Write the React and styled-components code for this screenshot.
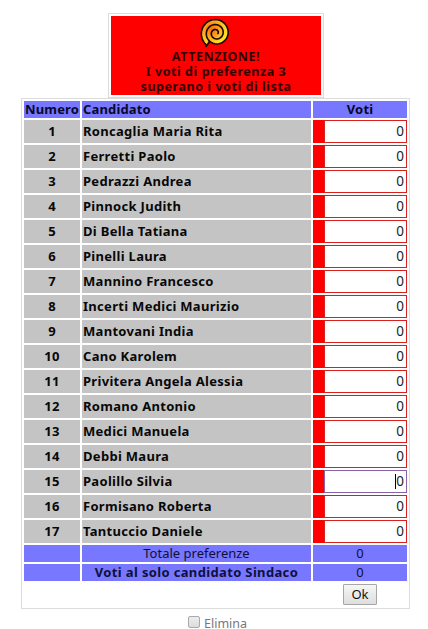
import React, { useState } from 'react';
import styled, { createGlobalStyle } from 'styled-components';

const candidates = [
  'Roncaglia Maria Rita',
  'Ferretti Paolo',
  'Pedrazzi Andrea',
  'Pinnock Judith',
  'Di Bella Tatiana',
  'Pinelli Laura',
  'Mannino Francesco',
  'Incerti Medici Maurizio',
  'Mantovani India',
  'Cano Karolem',
  'Privitera Angela Alessia',
  'Romano Antonio',
  'Medici Manuela',
  'Debbi Maura',
  'Paolillo Silvia',
  'Formisano Roberta',
  'Tantuccio Daniele',
];

const ACTIVE_ROW = 14;

// spiral winding clockwise from the tail at the lower left to the centre
const spiralPath = (from, to) => {
  const points = [];
  for (let deg = from; deg <= to; deg += 10) {
    const angle = ((deg + 126) * Math.PI) / 180;
    const radius = 15.4 - (deg / 360) * 5;
    const x = 17 + radius * Math.cos(angle);
    const y = 15 + radius * Math.sin(angle);
    points.push(`${x.toFixed(2)} ${y.toFixed(2)}`);
  }
  return `M${points.join('L')}`;
};

const SpiralIcon = () => (
  <svg width="34" height="30" viewBox="0 0 34 30">
    <defs>
      <radialGradient id="spiral" cx="0.38" cy="0.35" r="0.65">
        <stop offset="0" stopColor="#ff6a10" />
        <stop offset="0.45" stopColor="#ffa41c" />
        <stop offset="1" stopColor="#fff12a" />
      </radialGradient>
    </defs>
    <path d={`${spiralPath(0, 370)}L7 28.500Z`} fill="url(#spiral)" />
    <path
      d={`M10.500 24L7 28.500L${spiralPath(0, 970).slice(1)}`}
      fill="none"
      stroke="#160b00"
      strokeWidth="1.6"
      strokeLinecap="round"
      strokeLinejoin="round"
    />
  </svg>
);

const App = () => {
  const [votes, setVotes] = useState(candidates.map(() => '0'));

  const handleChange = (index, value) => {
    setVotes(votes.map((vote, i) => (i === index ? value : vote)));
  };

  return (
    <Page>
      <GlobalStyle />
      <Warning>
        <WarningBody>
          <SpiralIcon />
          <WarningText>
            ATTENZIONE!
            <br />
            I voti di preferenza 3
            <br />
            superano i voti di lista
          </WarningText>
        </WarningBody>
      </Warning>

      <VotesTable>
        <HeadCell>Numero</HeadCell>
        <HeadCell $align="left">Candidato</HeadCell>
        <HeadCell>Voti</HeadCell>

        {candidates.map((name, index) => (
          <React.Fragment key={name}>
            <Cell>{index + 1}</Cell>
            <Cell $align="left">{name}</Cell>
            <VoteCell>
              <VoteField $active={index === ACTIVE_ROW}>
                {index === ACTIVE_ROW && <Caret />}
                <VoteInput
                  value={votes[index]}
                  size={1}
                  onChange={(e) => handleChange(index, e.target.value)}
                />
              </VoteField>
            </VoteCell>
          </React.Fragment>
        ))}

        <TotalCell />
        <TotalCell>Totale preferenze</TotalCell>
        <TotalCell>0</TotalCell>
        <TotalCell />
        <TotalCell $bold>Voti al solo candidato Sindaco</TotalCell>
        <TotalCell>0</TotalCell>
        <ActionRow>
          <OkButton>Ok</OkButton>
        </ActionRow>
      </VotesTable>

      <DeleteLabel>
        <Checkbox type="checkbox" />
        Elimina
      </DeleteLabel>
    </Page>
  );
};

const GlobalStyle = createGlobalStyle`
  body {
    margin: 0;
    background: #fff;
  }

  * {
    box-sizing: border-box;
  }
`;

const Page = styled.div`
  width: 428px;
  height: 629px;
  padding-top: 13px;
  font-family: 'Noto Sans', sans-serif;
  font-size: 13px;
  color: #080808;
`;

const Warning = styled.div`
  width: 216px;
  height: 85px;
  margin-left: 108px;
  padding: 2px;
  border: 1px solid #dcdcdc;
`;

const WarningBody = styled.div`
  height: 79px;
  padding-top: 2px;
  display: flex;
  flex-direction: column;
  align-items: center;
  background: #ff0000;

  svg {
    flex: none;
    margin-bottom: 1px;
  }
`;

const WarningText = styled.div`
  line-height: 15px;
  font-weight: bold;
  font-size: 12.5px;
  letter-spacing: 0.55px;
  text-align: center;
  color: #330000;
  white-space: nowrap;
`;

const VotesTable = styled.div`
  display: grid;
  grid-template-columns: 56px 229px 94px;
  grid-template-rows: 17px repeat(17, 23px) 17px 17px 23px;
  gap: 2px;
  width: 389px;
  height: 511px;
  margin-left: 21px;
  padding: 2px;
  border: 1px solid #dcdcdc;
`;

const Cell = styled.div`
  display: flex;
  align-items: center;
  justify-content: ${props => props.$align || 'center'};
  padding: 0 1px;
  background: #c4c4c4;
  font-weight: bold;
  line-height: 17px;
  letter-spacing: 0.3px;
  white-space: nowrap;
`;

const HeadCell = styled(Cell)`
  background: #7777ff;
  color: #08082a;
  letter-spacing: 0.15px;
`;

const TotalCell = styled(Cell)`
  background: #7777ff;
  color: #101038;
  font-weight: ${props => props.$bold ? 'bold' : 'normal'};
  letter-spacing: ${props => props.$bold ? '0.35px' : '0'};
`;

const VoteCell = styled.div`
  display: flex;
  justify-content: flex-end;
  background: #ff0000;
`;

const VoteField = styled.div`
  display: flex;
  align-items: center;
  justify-content: flex-end;
  width: 83px;
  height: 23px;
  padding: 0 2px 1px 0;
  border: 1px solid ${props => props.$active ? '#8b62a8' : '#d8201c'};
  background: #fff;
`;

const Caret = styled.span`
  width: 1px;
  height: 15px;
  background: #000;
`;

const VoteInput = styled.input`
  width: 8px;
  height: 19px;
  padding: 0;
  border: 0;
  outline: 0;
  background: transparent;
  font-family: 'Noto Sans', sans-serif;
  font-size: 13.5px;
  text-align: right;
  color: #222;
`;

const ActionRow = styled.div`
  grid-column: 3;
  display: flex;
  align-items: center;
  justify-content: center;
`;

const OkButton = styled.button`
  width: 34px;
  height: 21px;
  padding: 0;
  border: 1px solid #a6a6a6;
  border-radius: 1px;
  background: linear-gradient(#f6f6f6, #dedede);
  font-family: 'Noto Sans', sans-serif;
  font-size: 13px;
  line-height: 17px;
  color: #111;
`;

const DeleteLabel = styled.label`
  display: flex;
  align-items: center;
  gap: 4px;
  height: 18px;
  margin: 6px 0 0 188px;
  font-size: 12.5px;
  line-height: 16px;
  color: #777;
`;

const Checkbox = styled.input`
  appearance: none;
  width: 12px;
  height: 12px;
  margin: 0 0 4px;
  border: 1px solid #aaa;
  border-radius: 2px;
  background: linear-gradient(#ededed, #dcdcdc);
`;

export default App;
